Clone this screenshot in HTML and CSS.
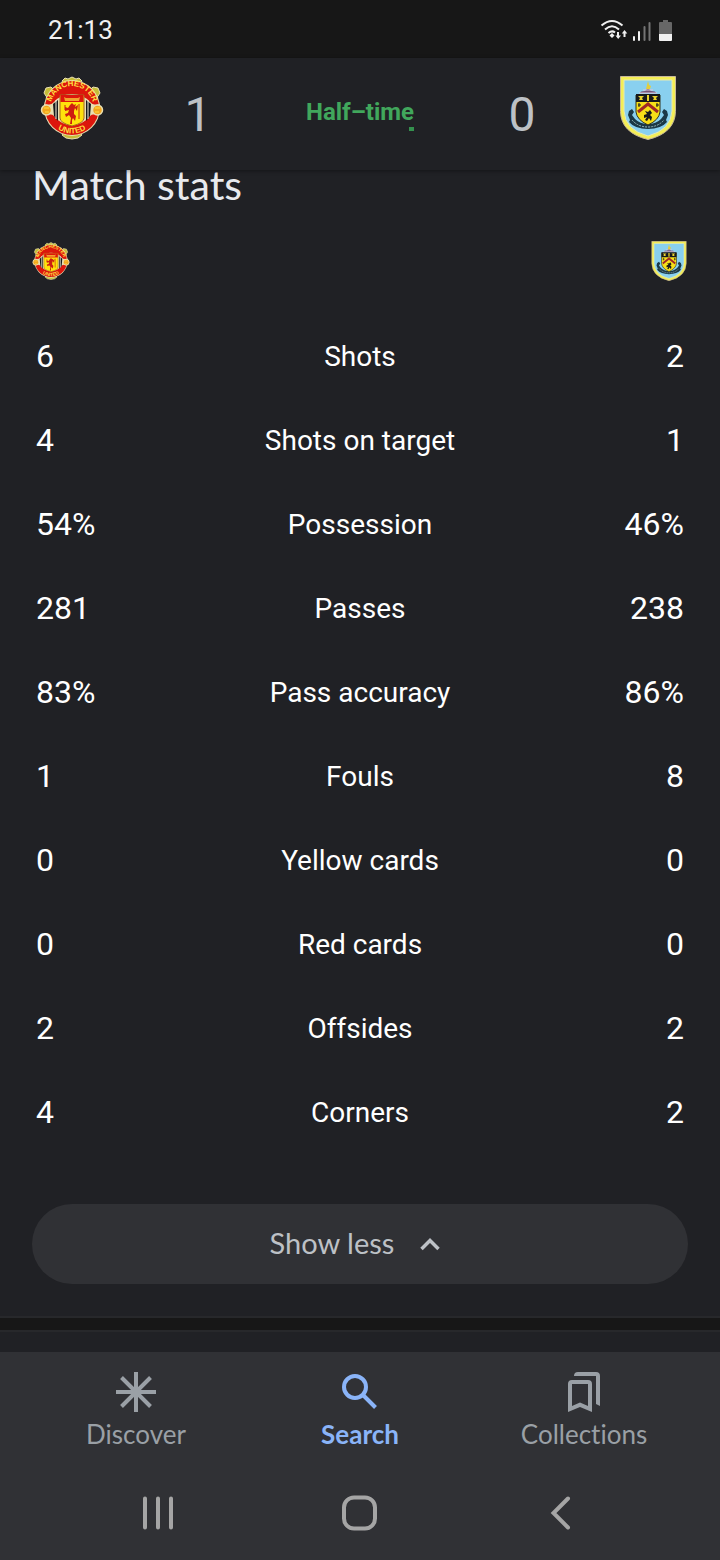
FILE: index.html
```html
<!DOCTYPE html>
<html lang="en">
<head>
<meta charset="utf-8">
<meta name="viewport" content="width=device-width">
<title>Match stats</title>
<link rel="stylesheet" href="styles.css">
</head>
<body>
<svg class="sprite" aria-hidden="true">
  <symbol id="united" viewBox="0 0 64 64">
    <g fill="#c5bd37" stroke="#e9dfb1" stroke-width="1">
      <path d="M22 5l3-3 3 1 4-2 4 2 3-1 3 3-2 4H24z"/>
      <path d="M4 17l2-5 5-1 4 4-7 8zM60 17l-2-5-5-1-4 4 7 8zM22 59l4 3 6 1 6-1 4-3-3-4H25z"/>
    </g>
    <circle cx="32" cy="32" r="28" fill="#e9dfb1"/>
    <circle cx="32" cy="32" r="27" fill="#dc160c"/>
    <path d="M4 28Q11 30 14 26Q21 18 32 18t18 8q3 4 10 2v11q-8-2-10 1-7 9-18 9t-18-9q-2-3-10-1z" fill="#e9dfb1"/>
    <path d="M13 28l5-4v21l-4-5zM51 28l-5-4v21l4-5z" fill="#17191c"/>
    <path d="M16 24v19M48 24v19" stroke="#f4f0de" stroke-width="1"/>
    <path d="M20 19h24v23q0 5-12 8-12-3-12-8z" fill="#ffe20c" stroke="#a5671e" stroke-width="1"/>
    <path d="M20.500 19h23v7h-23z" fill="#dc160c"/>
    <path d="M24 21l2 1h12l2-1-1 4H25z" fill="#f3a32d"/>
    <path d="M30 29l2-2 2 2 2-1-1 3 3-2-1 6-2-3-1 3v3l2 2-1 5-2-3-1 2v4h-2l1-6-2-3-3 2-1-3 3-1 1-3-4 1v-4l3 1z" fill="#ce1d10"/>
    <path d="M39 28v15M25 29v5" stroke="#ce1d10"/>
    <g fill="#f3a51d" stroke="#e9dfb1" stroke-width="1.500">
      <circle cx="6.500" cy="34" r="5"/><circle cx="57.500" cy="34" r="5"/>
    </g>
    <path d="M4 32h5M5 36h4M55 32h5M55 36h4" stroke="#ffdf42"/>
    <path id="arc-top" d="M11.500 38A21.500 21.500 0 1 1 52.500 38" fill="none"/>
    <path id="arc-bottom" d="M7 37A25.500 25.500 0 0 0 57 37" fill="none"/>
    <text class="crest-text"><textPath href="#arc-top" startOffset="50%">MANCHESTER</textPath></text>
    <text class="crest-text"><textPath href="#arc-bottom" startOffset="50%">UNITED</textPath></text>
  </symbol>
  <symbol id="burnley" viewBox="0 0 56 64">
    <path d="M.5.500h55v35Q55 57 28 63.500 1 57 .5 35.500z" fill="#f4ee56" stroke="#c7b798"/>
    <path d="M4 4h48v31Q51 54 28 60 5 54 4 35z" fill="#89d0ef" stroke="#e9ebb0"/>
    <path d="M9 35l3-2 2 3-2 3 3 4q5 5 13 5t13-5l3-4-2-3 2-3 3 2 1 4-2 5 1 2q-6 7-19 7T9 46l1-2-2-5z" fill="#1b3846"/>
    <path d="M12 44q6 7 16 7t16-7" fill="none" stroke="#95b9bb" stroke-dasharray="2 1"/>
    <path d="M16 19h24v17q-1 8-12 13-11-5-12-13z" fill="#f7df18" stroke="#31311c"/>
    <path d="M16 18h24v8H16z" fill="#17191c"/>
    <path d="M18 20h6l-2 2 1 2h-4l1-2zM32 20h6l-2 2 1 2h-4l1-2zM27 19h2v6h-2z" fill="#ead431"/>
    <path d="M18 36l10-8 10 8" fill="none" stroke="#9f2825" stroke-width="3"/>
    <path d="M19 27v4M18 29h3M37 27v4M36 29h3" stroke="#17191c"/>
    <path d="M25 35l3 1 2-2 2 3-2 2 2 2-1 4-2-3-2 3-2-1 2-3-3 1v-3l3-1z" fill="#17191c"/>
    <path d="M20 17q0-2 5-2l3-3 3 3q5 0 5 2z" fill="#73547a"/>
    <path d="M23 14h10M19 17h18" stroke="#e0c5d9"/>
    <path d="M26 13l1-4 1-4 1 4 2 1-1 3z" fill="#e6cd3a"/>
  </symbol>
</svg>

<div class="screen">
  <div class="status-bar">
    <time>21:13</time>
    <svg class="status-icons" viewBox="0 0 72 24" role="img" aria-label="Wi-Fi, mobile signal, battery">
      <g fill="none" stroke="#f1f1f1" stroke-width="2">
        <path d="M1.500 7.500Q12 -1.500 22.500 7.500M5 11.500Q12 5 19 11.500M8.500 15Q12 12 15 14.500"/>
      </g>
      <path d="M9.500 17.500L12 15l2.500 2.500L12 20z" fill="#f1f1f1"/>
      <path d="M18 14v4M24.500 19v-4" stroke="#f1f1f1" stroke-width="2"/>
      <path d="M15.500 17.500h5.500L18.200 21zM21.800 15.500h5.500L24.500 12z" fill="#f1f1f1"/>
      <path d="M34 19v3M39 14v8" stroke="#f1f1f1" stroke-width="2" stroke-linecap="round"/>
      <path d="M44.500 9v13M49.500 5v17" stroke="#747474" stroke-width="2" stroke-linecap="round"/>
      <path d="M59 5q0-1 1-1h3V2h5v2h3q1 0 1 1v11H59z" fill="#676767"/>
      <path d="M59 16h13v6q0 1-1 1H60q-1 0-1-1z" fill="#f1f1f1"/>
    </svg>
  </div>

  <header class="score-bar">
    <svg class="crest crest-large" role="img" aria-label="Manchester United"><use href="#united"/></svg>
    <span class="score">1</span>
    <div class="match-state"><span>Half–time</span><i class="live-mark"></i></div>
    <span class="score">0</span>
    <svg class="crest crest-large" role="img" aria-label="Burnley"><use href="#burnley"/></svg>
  </header>

  <main class="content">
    <section class="stats-card">
      <h1 class="title">Match stats</h1>
      <div class="teams">
        <svg class="crest crest-small" aria-hidden="true"><use href="#united"/></svg>
        <svg class="crest crest-small" aria-hidden="true"><use href="#burnley"/></svg>
      </div>
      <table class="stats" aria-label="Match stats">
        <tbody>
          <tr><td>6</td><th scope="row">Shots</th><td>2</td></tr>
          <tr><td>4</td><th scope="row">Shots on target</th><td>1</td></tr>
          <tr><td>54%</td><th scope="row">Possession</th><td>46%</td></tr>
          <tr><td>281</td><th scope="row">Passes</th><td>238</td></tr>
          <tr><td>83%</td><th scope="row">Pass accuracy</th><td>86%</td></tr>
          <tr><td>1</td><th scope="row">Fouls</th><td>8</td></tr>
          <tr><td>0</td><th scope="row">Yellow cards</th><td>0</td></tr>
          <tr><td>0</td><th scope="row">Red cards</th><td>0</td></tr>
          <tr><td>2</td><th scope="row">Offsides</th><td>2</td></tr>
          <tr><td>4</td><th scope="row">Corners</th><td>2</td></tr>
        </tbody>
      </table>
      <button class="show-less" type="button"><span class="show-less-label">Show less</span>
        <svg class="chevron" viewBox="0 0 20 14" aria-hidden="true"><path d="M1.500 12L10 3.500 18.500 12" fill="none" stroke="currentColor" stroke-width="3.500"/></svg>
      </button>
    </section>
    <div class="next-card"></div>
  </main>

  <footer class="bottom">
    <nav class="tabs" aria-label="Main">
      <a class="tab" href="#discover">
        <svg class="tab-icon" viewBox="0 0 40 40" aria-hidden="true"><path d="M20 0v40M0 20h40M5.500 5.500l29 29M34.500 5.500l-29 29" stroke="currentColor" stroke-width="4"/></svg>
        Discover
      </a>
      <a class="tab tab-active" href="#search" aria-current="page">
        <svg class="tab-icon" viewBox="0 0 40 40" aria-hidden="true"><g fill="none" stroke="currentColor" stroke-width="4"><circle cx="15" cy="15" r="11"/><path d="M22.500 22.500L35.500 35.500"/></g></svg>
        Search
      </a>
      <a class="tab" href="#collections">
        <svg class="tab-icon" viewBox="0 0 40 40" aria-hidden="true"><path fill="currentColor" fill-rule="evenodd" d="M4 12q0-4 4-4h16q4 0 4 4v28l-12-5-12 5zM8 12v22l8-3.500 8 3.500V12zM10 4q0-4 4-4h18q4 0 4 4v30l-4-2V4z"/></svg>
        Collections
      </a>
    </nav>
    <div class="system-nav">
      <button type="button" aria-label="Recent apps"><svg class="system-icon" viewBox="0 0 36 36"><path d="M4 3.500v29M17 3.500v29M30 3.500v29" fill="none" stroke="#a5a5a5" stroke-width="4" stroke-linecap="round"/></svg></button>
      <button type="button" aria-label="Home"><svg class="system-icon" viewBox="0 0 36 36"><rect x="2" y="2.500" width="31" height="31" rx="10" fill="none" stroke="#a5a5a5" stroke-width="4"/></svg></button>
      <button type="button" aria-label="Back"><svg class="system-icon" viewBox="0 0 36 36"><path d="M25 3.500L10.500 18 25 32.500" fill="none" stroke="#a5a5a5" stroke-width="4" stroke-linecap="round"/></svg></button>
    </div>
  </footer>
</div>
</body>
</html>
```
FILE: styles.css
```css
* {
  box-sizing: border-box;
}

body {
  margin: 0;
  background: #202125;
  color: #fff;
  font-family: Roboto, sans-serif;
  font-variant-ligatures: none;
}

button {
  border: 0;
  padding: 0;
  background: none;
  color: inherit;
  font: inherit;
}

svg {
  display: block;
}

.sprite {
  position: absolute;
  width: 0;
  height: 0;
}

.crest-text {
  fill: #ffdf42;
  font-family: "Liberation Sans", sans-serif;
  font-size: 8px;
  font-weight: 700;
  text-anchor: middle;
}

.screen {
  display: flex;
  flex-direction: column;
  min-height: 100vh;
}

.status-bar {
  display: flex;
  align-items: center;
  justify-content: space-between;
  padding: 1px 48px 0;
  height: 58px;
  background: #171717;
  color: #f1f1f1;
  font-size: 26px;
}

.status-icons {
  width: 72px;
  height: 24px;
}

.score-bar {
  position: sticky;
  top: 0;
  z-index: 1;
  display: grid;
  grid-template-columns: 20% 15% 1fr 15% 20%;
  align-items: center;
  justify-items: center;
  height: 112px;
  background: #202125;
  box-shadow: 0 1px 4px rgba(0, 0, 0, 0.4);
}

.crest-large {
  width: 64px;
  height: 64px;
  margin-bottom: 12px;
}

.score {
  color: #bdc1c6;
  font-size: 48px;
}

.match-state {
  display: flex;
  flex-direction: column;
  align-items: flex-end;
  color: #41a75c;
  font-size: 24px;
  font-weight: 700;
  line-height: 30px;
}

.live-mark {
  width: 5px;
  height: 4px;
  background: #34914e;
}

.content {
  flex: 1;
  display: flex;
  flex-direction: column;
}

.stats-card {
  padding: 0 32px 34px;
}

.title {
  margin: 0;
  color: #e8eaed;
  font-family: Lato, sans-serif;
  font-size: 41px;
  font-weight: 400;
  line-height: 30px;
}

.teams {
  display: flex;
  justify-content: space-between;
  margin: 41px 0 33px;
}

.crest-small {
  width: 38px;
  height: 40px;
}

.stats {
  width: 100%;
  border-collapse: collapse;
  table-layout: fixed;
}

.stats th,
.stats td {
  height: 84px;
  padding: 0 4px;
  font-weight: 400;
}

.stats th {
  width: 50%;
  font-size: 28px;
}

.stats td {
  font-size: 32px;
}

.stats td:last-child {
  text-align: right;
}

.show-less {
  display: flex;
  align-items: center;
  justify-content: center;
  gap: 26px;
  width: 100%;
  height: 80px;
  margin-top: 50px;
  padding-right: 10px;
  border-radius: 40px;
  background: #303135;
  color: #bdc1c6;
  font-family: Lato, sans-serif;
  font-size: 29px;
}

.show-less-label {
  padding-bottom: 4px;
}

.chevron {
  width: 20px;
  height: 14px;
}

.next-card {
  flex: 1;
  min-height: 34px;
  border-top: 12px solid #171717;
  box-shadow: 0 -2px #27282b, inset 0 2px #27282b;
}

.bottom {
  position: sticky;
  bottom: 0;
  background: #303135;
}

.tabs {
  display: grid;
  grid-template-columns: repeat(3, 1fr);
  padding: 20px 24px 0;
}

.tab {
  display: flex;
  flex-direction: column;
  align-items: center;
  gap: 6px;
  color: #9aa0a6;
  font-family: Lato, sans-serif;
  font-size: 26px;
  line-height: 32px;
  text-decoration: none;
}

.tab-active {
  color: #8ab4f8;
  font-weight: 700;
}

.tab-icon {
  width: 40px;
  height: 40px;
}

.system-nav {
  display: grid;
  grid-template-columns: repeat(3, 1fr);
  justify-items: center;
  padding: 45px 58px 29px;
}

.system-icon {
  width: 36px;
  height: 36px;
}
```
